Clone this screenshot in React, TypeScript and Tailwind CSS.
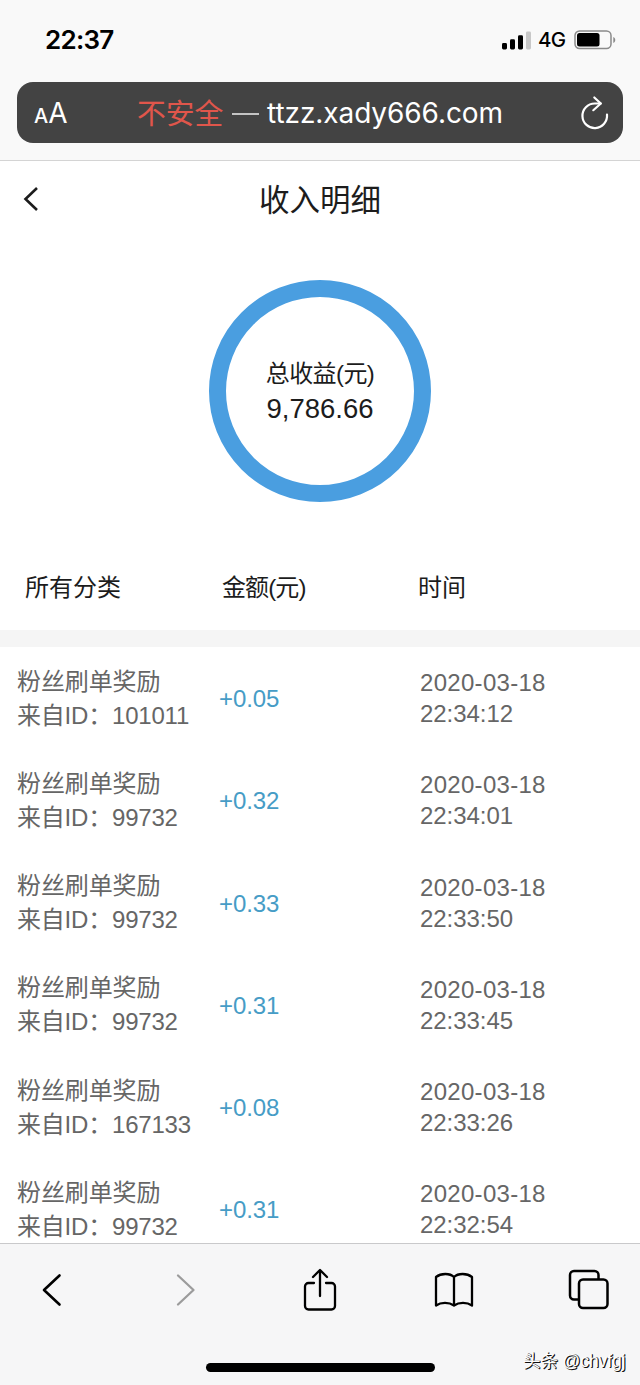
interface IncomeRecord {
    id: string;
    amount: string;
    date: string;
    time: string;
}

const records: IncomeRecord[] = [
    { id: '101011', amount: '+0.05', date: '2020-03-18', time: '22:34:12' },
    { id: '99732', amount: '+0.32', date: '2020-03-18', time: '22:34:01' },
    { id: '99732', amount: '+0.33', date: '2020-03-18', time: '22:33:50' },
    { id: '99732', amount: '+0.31', date: '2020-03-18', time: '22:33:45' },
    { id: '167133', amount: '+0.08', date: '2020-03-18', time: '22:33:26' },
    { id: '99732', amount: '+0.31', date: '2020-03-18', time: '22:32:54' },
];

// ─── Status bar + address bar ─────────────────────────────────────────────────
function StatusBar() {
    return (
        <div className="flex h-[82px] items-start justify-between pl-[45px] pr-6 font-['Inter','Noto_Sans_CJK_SC',sans-serif] text-black">
            <span className="mt-6 text-[26px] leading-[32px] font-semibold tracking-[-0.75px]">22:37</span>
            <div className="mt-[29px] flex h-[22px] items-center">
                <svg width="30" height="20" viewBox="0 0 30 20" className="mt-px">
                    <rect x="0" y="12" width="5" height="6.5" rx="1.4" />
                    <rect x="8" y="8.3" width="5" height="10.2" rx="1.4" />
                    <rect x="16" y="4.3" width="5" height="14.2" rx="1.4" />
                    <rect x="24" y="0.5" width="5" height="18" rx="1.4" fill="#c8c8c8" />
                </svg>
                <span className="ml-[6px] w-[30px] text-[20.5px] leading-[22px] font-medium tracking-[-0.6px]">4G</span>
                <svg width="42" height="20" viewBox="0 0 42 20" className="ml-[6px]">
                    <rect x="1" y="1" width="36" height="17.5" rx="4.5" fill="none" stroke="#8a8a8a" strokeWidth="1.5" />
                    <rect x="3" y="3" width="22.5" height="13.5" rx="2.5" />
                    <path d="M39.3 7v6c2.6-1 2.6-5 0-6z" fill="#8a8a8a" />
                </svg>
            </div>
        </div>
    );
}

function AddressBar() {
    return (
        <div className="mx-[17px] flex h-[61px] items-center rounded-[16px] bg-[#434343] font-['Inter','Noto_Sans_CJK_SC',sans-serif] text-white">
            <div className="ml-[17px] mt-[3px] flex w-[103px] items-baseline leading-[32px]">
                <span className="text-[20px] font-medium">A</span>
                <span className="text-[28px]">A</span>
            </div>
            <div className="flex w-[366px] items-center leading-[40px] whitespace-nowrap">
                <span className="mt-[2px] text-[28.8px] text-[#e0564b]">不安全</span>
                <span className="ml-[9px] mt-[3px] h-[1.5px] w-[28px] bg-[#c4c4c4]" />
                <span className="ml-[8px] mt-px text-[28px] tracking-[-0.08px]">ttzz.xady666.com</span>
            </div>
            <svg width="32" height="36" viewBox="0 0 32 36" fill="none" stroke="#fff" strokeWidth="2.2" strokeLinecap="round" strokeLinejoin="round" className="ml-[76px] -mt-[2px]">
                <path d="M28 20.7a12.3 12.3 0 1 1-12.3-11.2h6" />
                <path d="M15.3 3.5l6.500 6-7.500 6.700" />
            </svg>
        </div>
    );
}

// ─── Income total ─────────────────────────────────────────────────────────────
function TotalRing() {
    return (
        <div className="mx-auto mt-[41px] flex size-[222px] flex-col items-center justify-center rounded-full border-[17px] border-[#4a9ee0] pt-[2px] text-[#1c1c1c]">
            <span className="text-[24px] leading-[34px] tracking-[-0.6px]">总收益(元)</span>
            <span className="text-[27.5px] leading-[36px]">9,786.66</span>
        </div>
    );
}

function RecordRow({ record }: { record: IncomeRecord }) {
    return (
        <div className="flex h-[102.3px] shrink-0 text-[24px] text-[#666]">
            <div className="ml-[17px] mt-[17.5px] w-[202px] leading-[34px] whitespace-nowrap">
                <div className="tracking-[-0.1px]">粉丝刷单奖励</div>
                <div className="tracking-[-0.2px]">来自ID：{record.id}</div>
            </div>
            <div className="mt-[36px] w-[201px] leading-[32px] tracking-[-0.1px] text-[#469cc6]">{record.amount}</div>
            <div className="mt-[20px] leading-[31px]">
                <div className="tracking-[0.3px]">{record.date}</div>
                <div className="tracking-[-0.05px]">{record.time}</div>
            </div>
        </div>
    );
}

// ─── Browser toolbar ──────────────────────────────────────────────────────────
function Toolbar() {
    return (
        <div className="flex h-[142px] shrink-0 flex-col border-t border-[#c9c9cb] bg-[#f6f6f7]">
            <div className="flex h-[92px] items-center pl-[40px] pr-[28px]">
                <svg width="24" height="36" viewBox="0 0 24 36" fill="none" stroke="#000" strokeWidth="2.6" strokeLinecap="round" strokeLinejoin="round">
                    <path d="M19.5 3.5L4 18l15.5 14.5" />
                </svg>
                <svg width="24" height="36" viewBox="0 0 24 36" fill="none" stroke="#9c9c9c" strokeWidth="2.3" strokeLinecap="round" strokeLinejoin="round" className="ml-[110px]">
                    <path d="M4 3.5L19.5 18L4 32.5" />
                </svg>
                <svg width="40" height="46" viewBox="0 0 40 46" fill="none" stroke="#000" strokeWidth="2.3" strokeLinecap="round" strokeLinejoin="round" className="ml-[102px]">
                    <path d="M14 16H8.5A3.5 3.5 0 0 0 5 19.5V39a3.5 3.5 0 0 0 3.5 3.5h23A3.5 3.5 0 0 0 35 39V19.5a3.5 3.5 0 0 0-3.5-3.5H26" />
                    <path d="M20 29V3.5M13 10l7-7 7 7" />
                </svg>
                <svg width="42" height="40" viewBox="0 0 42 40" fill="none" stroke="#000" strokeWidth="2.3" strokeLinejoin="round" className="ml-[93px]">
                    <path d="M21 7C17 3 8 3 3 7V35.5c5-3.500 13-3.500 18 0 5-3.500 13-3.500 18 0V7C34 3 25 3 21 7zM21 7V35.5" />
                </svg>
                <svg width="44" height="44" viewBox="0 0 44 44" fill="none" stroke="#000" strokeWidth="2.5" strokeLinejoin="round" className="ml-[92px]">
                    <path d="M11.5 31.5H7A4 4 0 0 1 3 27.5V7a4 4 0 0 1 4-4h20.5a4 4 0 0 1 4 4v4.5" />
                    <rect x="12" y="11.5" width="28.5" height="28.5" rx="4" />
                </svg>
            </div>
            <div className="mt-[11px] flex">
                <div className="ml-[206px] mt-[16px] h-[9px] w-[229px] shrink-0 rounded-full bg-black" />
                <span className="ml-[88px] text-[17.5px] leading-[28px] tracking-[-0.1px] whitespace-nowrap text-white [text-shadow:1px_1px_0_#111,1px_0_0_#333]">头条 @chvfgj</span>
            </div>
        </div>
    );
}

export default function App() {
    return (
        <div className="flex h-[1385px] w-[640px] flex-col overflow-hidden bg-white font-['Liberation_Sans','Noto_Sans_CJK_SC',sans-serif]">
            <header className="h-[161px] shrink-0 border-b border-[#d4d4d4] bg-[#f9f9f9]">
                <StatusBar />
                <AddressBar />
            </header>

            <main className="flex min-h-0 flex-1 flex-col overflow-hidden">
                <div className="grid h-[78px] shrink-0 grid-cols-[60px_1fr_60px] items-center text-[#1c1c1c]">
                    <svg width="20" height="28" viewBox="0 0 20 28" fill="none" stroke="#1c1c1c" strokeWidth="2.6" className="ml-[21px] -mt-[3px]">
                        <path d="M16 3L4.5 14 16 25" />
                    </svg>
                    <h1 className="text-center text-[30.5px] leading-[44px]">收入明细</h1>
                </div>

                <div className="h-[304px] shrink-0 overflow-hidden">
                    <TotalRing />
                </div>

                <div className="flex h-[87px] shrink-0 pt-[28px] text-[24px] leading-[34px] text-[#1c1c1c]">
                    <span className="ml-[25px] w-[197px]">所有分类</span>
                    <span className="w-[196px] tracking-[-0.9px]">金额(元)</span>
                    <span>时间</span>
                </div>
                <div className="h-[17px] shrink-0 bg-[#f5f5f5]" />

                {records.map((record, i) => (
                    <RecordRow key={i} record={record} />
                ))}
            </main>

            <Toolbar />
        </div>
    );
}
